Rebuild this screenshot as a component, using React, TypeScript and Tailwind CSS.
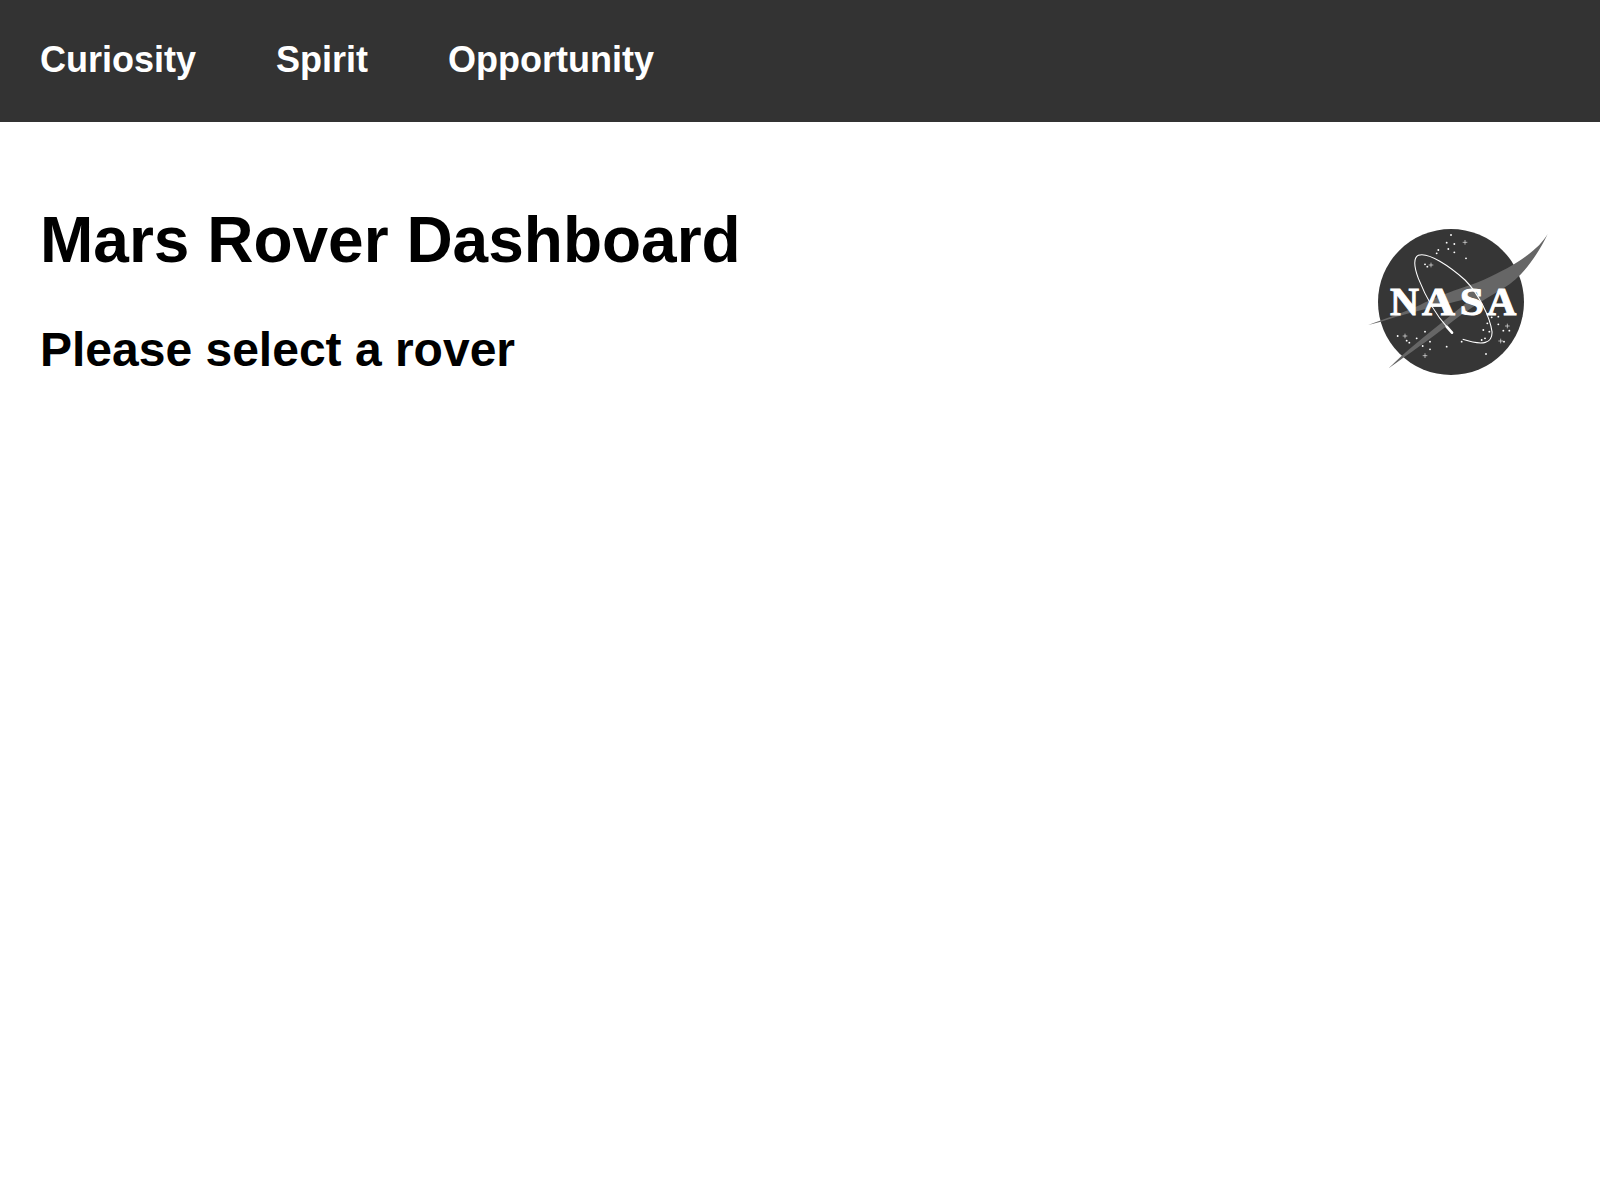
const NAV_ITEMS = ["Curiosity", "Spirit", "Opportunity"];

const DOTS = [
  [303, 75], [290, 98], [313, 102], [265, 120], [295, 117], [313, 127], [348, 145], [260, 130],
  [225, 163], [232, 170], [445, 343], [412, 340], [400, 360], [418, 365], [460, 362], [478, 362],
  [462, 395], [405, 385], [395, 390], [425, 322], [445, 320], [143, 378], [170, 392], [200, 385],
  [225, 365], [240, 395], [218, 408], [240, 418], [290, 410], [335, 395], [408, 432], [178, 398],
];

const SPARKLES = [
  [345, 97], [243, 165], [472, 348], [452, 393], [165, 378], [225, 437],
];

// x and width of each logo letter, the wide "worm" serif isn't installed so they get stretched
const LETTERS = [
  { char: "N", x: 120, width: 87 },
  { char: "A", x: 216, width: 99 },
  { char: "S", x: 329, width: 73 },
  { char: "A", x: 411, width: 88 },
];

function NasaLogo() {
  return (
    <svg viewBox="0 0 630 510" className="w-[210px] h-[170px] shrink-0 mt-[88px]">
      <circle cx="303" cy="276" r="219" fill="#363636" />
      {DOTS.map(([x, y]) => (
        <circle key={`${x}-${y}`} cx={x} cy={y} r="2.8" fill="#fff" />
      ))}
      {SPARKLES.map(([x, y]) => (
        <path key={`${x}-${y}`} d={`M${x - 7} ${y}H${x + 7}M${x} ${y - 7}V${y + 7}`} stroke="#fff" strokeWidth="1.8" />
      ))}
      <path
        d="M593 72C565 120 500 165 400 210C340 235 290 245 210 285C150 312 95 330 55 345C110 332 160 312 215 300C270 287 330 272 370 262L285 330C225 378 165 425 116 475C175 432 240 388 290 348C340 308 400 270 460 235C520 200 565 130 593 72Z"
        fill="#666"
      />
      {LETTERS.map((letter) => (
        <text
          key={letter.x}
          x={letter.x}
          y="316"
          textLength={letter.width}
          lengthAdjust="spacingAndGlyphs"
          fill="#fff"
          stroke="#fff"
          strokeWidth="3"
          fontSize="120"
          fontWeight="700"
          fontFamily='"Liberation Serif", serif'
        >
          {letter.char}
        </text>
      ))}
      <path
        d="M292 352C258 315 225 255 205 205C192 170 188 145 205 136C235 125 300 170 345 210C385 250 420 320 426 365C428 400 400 408 338 388"
        fill="none"
        stroke="#fff"
        strokeWidth="3.2"
      />
      <path d="M290 350L306 368" stroke="#fff" strokeWidth="8" strokeLinecap="round" />
    </svg>
  );
}

export default function App() {
  return (
    <div className="min-h-[1190px] bg-white text-black font-['Liberation_Sans',Arial,sans-serif]">
      <nav className="flex items-center gap-20 h-[122px] px-10 pb-1 bg-[#333333]">
        {NAV_ITEMS.map((item) => (
          <a key={item} className="text-[36px] leading-[41px] font-bold text-white">
            {item}
          </a>
        ))}
      </nav>
      <main className="flex justify-between items-start pl-10 pr-10">
        <div>
          <h1 className="mt-[81px] text-[64px] leading-[74px] font-bold">Mars Rover Dashboard</h1>
          <h2 className="mt-[45px] text-[48px] leading-[55px] font-bold">Please select a rover</h2>
        </div>
        <NasaLogo />
      </main>
    </div>
  );
}
